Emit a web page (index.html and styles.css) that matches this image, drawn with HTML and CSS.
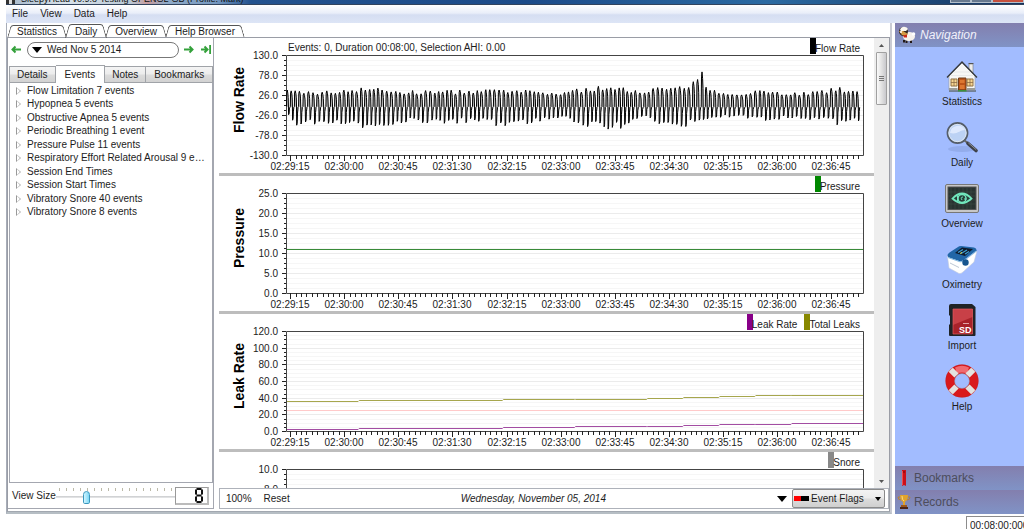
FILE: index.html
```html
<!DOCTYPE html>
<html lang="en">
<head>
<meta charset="utf-8">
<title>SleepyHead</title>
<link rel="stylesheet" href="styles.css">
</head>
<body>
<div class="window">
  <header class="titlebar"><span class="title-icon"></span><span class="title-text">SleepyHead v0.9.8-Testing OPENGL-GB (Profile: Mark)</span><span class="window-buttons"><i></i><i></i><i class="close"></i></span></header>
  <nav class="menubar"><button>File</button><button>View</button><button>Data</button><button>Help</button></nav>
  <div class="workspace">
    <div class="content">
      <div class="tabs" role="tablist">
        <button class="tab" role="tab">Statistics</button>
        <button class="tab active" role="tab" aria-selected="true">Daily</button>
        <button class="tab" role="tab">Overview</button>
        <button class="tab" role="tab">Help Browser</button>
      </div>
      <main class="page">
        <section class="day">
          <div class="datebar">
            <button class="arrow" aria-label="Previous day"><svg width="10" height="9" viewBox="0 0 10 9"><path d="M10 4.500H2M4.500 1.500L1.500 4.500l3 3" /></svg></button>
            <button class="date"><svg width="10" height="6" viewBox="0 0 10 6"><path d="M0 0h10L5 6z" fill="#000"/></svg>Wed Nov 5 2014</button>
            <button class="arrow" aria-label="Next day"><svg width="10" height="9" viewBox="0 0 10 9"><path d="M0 4.500H8M5.500 1.500l3 3-3 3"/></svg></button>
            <button class="arrow last" aria-label="Most recent day"><svg width="10" height="9" viewBox="0 0 10 9"><path d="M0 4.500H6M3.500 1.500l3 3-3 3M9.200 0v9"/></svg></button>
          </div>
          <div class="subtabs" role="tablist">
            <button role="tab">Details</button><button role="tab" class="active" aria-selected="true">Events</button><button role="tab">Notes</button><button role="tab" class="grow">Bookmarks</button>
          </div>
          <div class="tree-box">
            <ul class="tree">
              <li>Flow Limitation 7 events</li>
              <li>Hypopnea 5 events</li>
              <li>Obstructive Apnea 5 events</li>
              <li>Periodic Breathing 1 event</li>
              <li>Pressure Pulse 11 events</li>
              <li>Respiratory Effort Related Arousal 9 events</li>
              <li>Session End Times</li>
              <li>Session Start Times</li>
              <li>Vibratory Snore 40 events</li>
              <li>Vibratory Snore 8 events</li>
            </ul>
          </div>
          <div class="viewsize">
            <label for="view-size">View Size</label>
            <div class="slider"><div class="ticks"></div><input type="range" id="view-size" min="1" max="30" value="8"></div>
            <output class="lcd" for="view-size" aria-label="8"><svg width="8" height="15" viewBox="0 0 8 15"><path d="M1.500 1h5M1.500 7.500h5M1.500 14h5M1 1.500v5M7 1.500v5M1 8.500v5M7 8.500v5"/></svg></output>
          </div>
        </section>
        <section class="graphs">
          <div class="scroller">
            <div class="charts">
              <article class="chart" data-chart="flow"><header><span class="info">Events: 0, Duration 00:08:00, Selection AHI: 0.00</span><span class="legend black">Flow Rate</span></header></article>
              <article class="chart" data-chart="pressure"><header><span class="legend green">Pressure</span></header></article>
              <article class="chart" data-chart="leak"><header><span class="legend purple">Leak Rate</span><span class="legend olive">Total Leaks</span></header></article>
              <article class="chart" data-chart="snore"><header><span class="legend gray">Snore</span></header></article>
            </div>
            <div class="scrollbar">
              <svg width="5" height="3" viewBox="0 0 5 3"><path d="M0 3L2.500 0 5 3z"/></svg>
              <div class="thumb"><i></i></div>
              <svg class="down" width="5" height="3" viewBox="0 0 5 3"><path d="M0 0h5L2.500 3z"/></svg>
            </div>
          </div>
          <footer class="graphbar">
            <button>100%</button><button class="reset">Reset</button>
            <em>Wednesday, November 05, 2014</em>
            <button class="toggle" aria-label="Show graphs"><svg width="10" height="6" viewBox="0 0 10 6"><path d="M0 0h10L5 6z"/></svg></button>
            <div class="combo"><select aria-label="Graph"><option>Event Flags</option></select><svg width="6" height="4" viewBox="0 0 6 4"><path d="M0 0h6L3 4z"/></svg></div>
          </footer>
        </section>
      </main>
    </div>
    <aside class="sidebar">
      <h2 class="side-head nav-head"><svg width="18" height="18" viewBox="0 0 18 18"><path d="M6 14v2.500M8.500 14v3M13 14v3" stroke="#221815" stroke-width="2"/><ellipse cx="11" cy="10.500" rx="6" ry="4.500" fill="#f6f2ed"/><circle cx="15.500" cy="8" r="1.800" fill="#fff"/><circle cx="5.500" cy="5.500" r="4.500" fill="#32261f"/><path d="M2 4C3 0 8 0 10 3l-2 2L3 5z" fill="#faf7f1"/><path d="M1 5h4l5 3-2 2-4-1z" fill="#d49b45"/><path d="M5 9.500l4-1v3H6z" fill="#c92618"/><circle cx="3" cy="6" r="1" fill="#fff"/></svg>Navigation</h2>
      <nav class="side-nav">
        <a href="#statistics"><svg width="34" height="34" viewBox="0 0 34 34"><path d="M4 32h27" stroke="#718098" stroke-width="2"/><path d="M24 5h4v9h-4z" fill="#eee" stroke="#777" stroke-width=".6"/><path d="M23.500 4.500h5" stroke="#555"/><path d="M4 17L17 4l13 13v14H4z" fill="#f7f7f5" stroke="#999" stroke-width=".6"/><path d="M9 13h16M6 16.500h22M5 20h24M5 23.500h24M5 27h24" stroke="#dddfe0" stroke-width=".6"/><path d="M2 18.500L17 3l15 15.500" fill="none" stroke="#35383a" stroke-width="1.300"/><path d="M6 20h6v7H6zM22 20h6v7h-6z" fill="#f5d491" stroke="#947544"/><path d="M9 20v7M6 23.500h6M25 20v7M22 23.500h6" stroke="#8b6c48" stroke-width=".8"/><path d="M13.500 19h7.500v12h-7.500z" fill="#bd5419" stroke="#6c3a18"/><path d="M15 21h4.500v3H15zM15 26h4.500v4H15z" fill="#dc7731"/><path d="M4 29h8.500v2H4zM22 29h8v2h-8z" fill="#9b9c98"/><path d="M13 31h8.500v1.500H13z" fill="#3c913c"/></svg><span>Statistics</span></a>
        <a href="#daily"><svg width="34" height="34" viewBox="0 0 34 34"><ellipse cx="17" cy="29" rx="14" ry="3" fill="#7189c1" opacity=".3"/><circle cx="12.500" cy="13" r="10" fill="#bcd2f4" stroke="#555e6a" stroke-width="1.800"/><circle cx="12.500" cy="13" r="8.700" fill="none" stroke="#e7edf3" stroke-width=".8"/><path d="M5 13a8 8 0 0 1 15-3c-5 0-8 5-15 3z" fill="#e6efff" opacity=".8"/><path d="M19.500 20.500l4 3" stroke="#666" stroke-width="2"/><path d="M23 23.500l8 7" stroke="#3d4048" stroke-width="3.600" stroke-linecap="round"/><path d="M23.500 23l7.500 6.500" stroke="#8d9196" stroke-linecap="round"/></svg><span>Daily</span></a>
        <a href="#overview"><svg width="34" height="34" viewBox="0 0 34 34"><rect x=".5" y="3.500" width="33" height="28" rx="1.500" fill="#c7c7c7" stroke="#777"/><rect x="3" y="6" width="28" height="22.500" fill="#293331" stroke="#555"/><path d="M6 7v21M10 7v21M14 7v21M18 7v21M22 7v21M26 7v21M3 11h28M3 15h28M3 19h28M3 23h28" stroke="#405149" stroke-width=".5"/><path d="M7.500 17.500q9.500-10 19 0-9.500 9-19 0z" fill="#263e39" stroke="#72e7bd" stroke-width="1.800"/><circle cx="17" cy="17.500" r="4" fill="none" stroke="#72e7bd" stroke-width="1.500"/><path d="M12.500 14.500v6M18 16q-3 0-1 3M19 18h2.500" stroke="#72e7bd" fill="none"/></svg><span>Overview</span></a>
        <a href="#oximetry"><svg width="34" height="34" viewBox="0 0 34 34"><path d="M2.500 14.500L4 26l10 5.500q2 .5 4-1.500l11-10 3-11-13 10z" fill="#fff" stroke="#c2cbdc" stroke-width=".6"/><path d="M2.500 13q0-1 2-2.500L13 5q1-1 3-1l13 1.500q3 .5 2.500 3.500L18 18.500q-2 1-4 .5L4 15.500q-1.500-1-1.500-2.500z" fill="#2166a7"/><path d="M3 15.500l12 4.300q2 .2 4-1.300L31 9" fill="none" stroke="#82b7df"/><path d="M10 11l7-5.500L28 7l-8 7z" fill="#101b2b"/><path d="M13 10.500l5-3M16 11.500l6-3.500M20 12l4-2.500" stroke="#3e9ed3" stroke-width="1.300"/><path d="M15 11.500l2-1" stroke="#dedc4e"/><circle cx="20.500" cy="20.500" r="3.200" fill="#16558e"/><path d="M5 21l9 4.500" stroke="#bdc7d3"/></svg><span>Oximetry</span></a>
        <a href="#import"><svg width="34" height="34" viewBox="0 0 34 34"><path d="M6 1h21l3.500 3v28q0 1-1 1H5q-1 0-1-1V22l1-1v-8l-1-1V3q0-2 2-2z" fill="#202326"/><path d="M8 6h19.500v25H8z" fill="#a8222a"/><path d="M8 6h19.500v8L8 22z" fill="#c84047"/><path d="M8 6h19.500v25H8z" fill="none" stroke="#e05a5f" stroke-width=".7"/><path d="M18 20.500h6" stroke="#e3a4a7"/><text x="14" y="30" class="sd">SD</text></svg><span>Import</span></a>
        <a href="#help"><svg width="34" height="34" viewBox="0 0 34 34"><circle cx="17" cy="17" r="12" fill="none" stroke="#d9191c" stroke-width="9"/><path d="M10 3.500Q17 0 24 3.500l-2 6q-5-2-10 0z" fill="#f16b70"/><g stroke="#e3e2df" stroke-width="6"><path d="M5.500 5.500l6 6M22.500 22.500l6 6M28.500 5.500l-6 6M11.500 22.500l-6 6"/></g><circle cx="17" cy="17" r="16.300" fill="none" stroke="#a9292e" stroke-opacity=".35" stroke-width=".7"/><circle cx="17" cy="17" r="7.500" fill="none" stroke="#947a85" stroke-opacity=".5"/></svg><span>Help</span></a>
      </nav>
      <button class="side-head"><svg width="18" height="18" viewBox="0 0 18 18"><path d="M7 1h4v16l-2-1-2 1z" fill="#cc1019"/><path d="M7.500 2v14" stroke="#ed4b4b"/><circle cx="9" cy="3" r=".8" fill="#700"/></svg>Bookmarks</button>
      <button class="side-head"><svg width="18" height="18" viewBox="0 0 18 18"><path d="M5 2h8c0 5-2 6-3 7v3H8V9C6 8 5 6 5 2z" fill="#e1a32b"/><path d="M5 4H3q0 3 3 3M13 4h2q0 3-3 3" fill="none" stroke="#bd8431"/><path d="M7 3q0 4 2 5" stroke="#f9dc83" fill="none"/><path d="M6 12h6v2H6z" fill="#9c561d"/><path d="M5 14h8v2H5z" fill="#4b2419"/></svg>Records</button>
    </aside>
  </div>
  <footer class="status"><input aria-label="Duration" value="00:08:00:000" readonly></footer>
</div>
<script src="charts.js"></script>
</body>
</html>
```

FILE: styles.css
```css
* { box-sizing: border-box; }
body { margin: 0; background: #fff; color: #1c1c1c; font: 10px/12px "Liberation Sans", Arial, sans-serif; overflow: hidden; }
button, input, select { font: inherit; color: inherit; border: 0; background: none; margin: 0; padding: 0; }
svg { display: block; flex: none; }
.window { height: 100vh; display: flex; flex-direction: column; padding-left: 6px; }

.titlebar { height: 5px; flex: none; display: flex; align-items: flex-end; overflow: hidden; background: linear-gradient(90deg, #a5b7c9, #d8e2ea 60px, #b9c7d4 125px, #c79a9c 142px, #90abc8 160px, #7598c0 210px, #23528e 245px, #1c4b89 520px, #2b6aa2 760px, #16345f); border-bottom: 1px solid #31435d; }
.title-icon { width: 9px; height: 4px; margin: 0 6px 0 0; background: repeating-linear-gradient(90deg, #333 0 3px, #ddd 3px 6px); }
.title-text { white-space: nowrap; color: #111; font-size: 9px; line-height: 9px; }
.window-buttons { margin-left: auto; display: flex; align-self: flex-start; }
.window-buttons i { width: 21px; height: 3px; background: #66788e; border: 1px solid #b3bfcb; border-top: 0; }
.window-buttons .close { width: 32px; background: #c6503d; }

.menubar { height: 18px; flex: none; display: flex; gap: 12px; padding: 0 6px; background: linear-gradient(#fff, #e9eef9 45%, #d5def2 55%, #dde5f6); }
.workspace { flex: 1; min-height: 0; display: flex; gap: 3px; }
.content { flex: 1; min-width: 0; display: flex; flex-direction: column; border: 1px solid #a7adb8; border-top: 0; border-right: 2px solid #c9cbd3; border-bottom: 2px solid #b6bec4; }

.tabs { height: 14px; flex: none; display: flex; gap: 2px; padding: 2px 2px 0; }
.tab { position: relative; height: 12px; padding: 0 8px; line-height: 13px; }
.tab::before, .tab::after { content: ""; position: absolute; top: 0; bottom: 0; width: 50%; border-top: 1px solid #555; pointer-events: none; }
.tab::before { left: 0; border-left: 1px solid #555; border-top-left-radius: 3px; transform: skewX(-16deg); }
.tab::after { right: 0; border-right: 1px solid #555; border-top-right-radius: 3px; transform: skewX(16deg); }
.tab.active { height: 14px; margin-top: -1px; padding-top: 1px; }

.page { flex: 1; min-height: 0; display: flex; gap: 5px; border: 1px solid #9a9da6; border-bottom-color: #a2a8b0; padding-bottom: 2px; }
.day { width: 206px; flex: none; display: flex; flex-direction: column; border: 1px solid #a4a7b0; border-top: 0; border-left: 0; padding: 0 0 0 1px; }
.datebar { display: flex; align-items: center; height: 27px; padding: 0 2px 4px; flex: none; }
.arrow svg path { fill: none; stroke: #34a13b; stroke-width: 2; }
.date { width: 152px; height: 16px; margin: 0 5px 0 6px; display: flex; align-items: center; gap: 5px; padding: 0 4px; border: 1px solid #777; border-radius: 8px; }
.arrow.last { margin-left: 7px; }
.subtabs { height: 18px; flex: none; display: flex; align-items: flex-end; }
.subtabs button { height: 17px; padding: 0 7px; border: 1px solid #a0a3a8; border-left-width: 0; background: linear-gradient(#f4f4f4, #ececec 48%, #dcdcdc 52%, #d2d2d2); }
.subtabs button:first-child { border-left-width: 1px; }
.subtabs button.active { height: 18px; padding: 0 9px; background: #fff; border-bottom: 0; }
.subtabs .grow { flex: 1; }
.tree-box { flex: 1; min-height: 0; border: 1px solid #a4a7b0; border-top: 0; overflow: hidden; }
.tree { list-style: none; margin: 0; padding: 1px 4px 0 6px; height: 136px; display: grid; grid-template-rows: repeat(10, 1fr); align-items: center; }
.tree li { min-width: 0; padding-left: 11px; overflow: hidden; text-overflow: ellipsis; white-space: nowrap; position: relative; }
.tree li::before, .tree li::after { content: ""; position: absolute; left: 0; top: 2px; border: 4px solid transparent; border-left: 5px solid #999; border-right: 0; }
.tree li::after { left: 1px; top: 3px; border-width: 3px 0 3px 3px; border-left-color: #fff; }

.viewsize { height: 25px; flex: none; display: flex; align-items: center; padding: 0 4px 0 3px; }
.slider { flex: 1; min-width: 0; display: flex; flex-direction: column; }
.ticks { height: 3px; margin: 0 3px 0 3px; background: repeating-linear-gradient(90deg, #bbb9a8 0 1px, transparent 1px 7px); }
.slider input { appearance: none; width: 100%; height: 13px; background: linear-gradient(#c9cbcd, #e9eaeb) center / 100% 2px no-repeat; }
.slider input::-webkit-slider-thumb { appearance: none; width: 7px; height: 13px; border: 1px solid #3a97be; border-radius: 4px 4px 2px 2px; background: linear-gradient(90deg, #d2f5ff, #7ed9f7); }
.lcd { width: 34px; height: 18px; display: flex; align-items: center; justify-content: flex-end; padding-right: 4px; border: 1px solid #999; border-right: 2px solid #bbb; border-bottom: 2px solid #bbb; }
.lcd path { stroke: #111; stroke-width: 2; }

.graphs { flex: 1; min-width: 0; display: flex; flex-direction: column; }
.scroller { flex: 1; min-height: 0; display: flex; overflow: hidden; }
.charts { flex: 1; min-width: 0; overflow: hidden; }
.chart { height: 138px; border-bottom: 3px solid #bdbdbd; }
.chart header { height: 17px; display: flex; justify-content: flex-end; gap: 7px; padding: 0 14px 0 69px; }
.info { margin-right: auto; padding-top: 4px; }
.legend { padding-top: 5px; padding-left: 5px; height: 16px; background: left / 6px 100% no-repeat; }
.black { background-image: linear-gradient(#000, #000); }
.green { background-image: linear-gradient(#080, #080); }
.purple { background-image: linear-gradient(#808, #808); }
.olive { background-image: linear-gradient(#880, #880); }
.gray { background-image: linear-gradient(#888, #888); }
.plot { width: 100%; height: 118px; overflow: visible; fill: #1c1c1c; }
.plot .name { font-size: 14px; font-weight: bold; fill: #000; }
.plot path { fill: none; stroke-width: 1; }
.plot .wave { fill: #bbb; }
.scrollbar { width: 15px; flex: none; background: #eee; display: flex; flex-direction: column; align-items: center; padding: 6px 1px 5px; fill: #555; }
.thumb { width: 11px; height: 53px; margin-top: 5px; display: grid; place-items: center; border: 1px solid #a0a0a0; border-radius: 1px; background: linear-gradient(90deg, #fafafa, #e2e2e2 50%, #c8c8cc); }
.thumb i { width: 5px; height: 6px; background: repeating-linear-gradient(#777 0 1px, transparent 1px 2px); }
.scrollbar .down { margin-top: auto; }
.graphbar { height: 21px; flex: none; display: flex; align-items: center; padding: 0 3px 0 6px; border: 1px solid #aeb2ba; }
.reset { margin-left: 12px; }
.graphbar em { flex: 1; text-align: center; }
.toggle { margin-right: 5px; }
.combo { display: grid; align-items: center; width: 93px; height: 19px; border: 1px solid #8a8a8a; border-radius: 2px; background: linear-gradient(#f3f3f3, #ebebeb 48%, #dcdcdc 52%, #cfcfcf); }
.combo > * { grid-area: 1 / 1; }
.combo select { appearance: none; width: 100%; height: 17px; padding-left: 18px; background: linear-gradient(90deg, #f00 50%, #000 50%) 1px center / 15px 5px no-repeat; }
.combo svg { justify-self: end; margin-right: 3px; pointer-events: none; }

.sidebar { width: 129px; flex: none; display: flex; flex-direction: column; background: #a2bcff; }
.side-head { margin: 0; height: 24px; flex: none; display: flex; align-items: center; gap: 0; padding: 0; font-size: 12px; font-weight: normal; color: #4d4d5c; background: linear-gradient(#837fae, #8093c6); }
.side-head svg { margin-right: 1px; }
.nav-head { color: #f1f1fa; font-style: italic; padding: 0 3px; gap: 3px; }
.side-nav { flex: 1; min-height: 0; padding: 12px 0 0 5px; }
.side-nav a { height: 61px; display: flex; flex-direction: column; align-items: center; gap: 3px; color: inherit; text-decoration: none; }
.sd { font-size: 9px; font-weight: bold; fill: #fff; }
.status { height: 15px; flex: none; display: flex; justify-content: flex-end; overflow: hidden; padding-top: 2px; }
.status input { width: 58px; height: 18px; flex: none; border: 1px solid #8c8c8c; border-right: 0; padding: 0 0 0 3px; }
```

FILE: charts.js
```js
const LEFT = 67, RIGHT = 11, H = 100;
const START = 11.5, SPAN = 480;
const times = ["02:29:15", "02:30:00", "02:30:45", "02:31:30", "02:32:15", "02:33:00", "02:33:45", "02:34:30", "02:35:15", "02:36:00", "02:36:45"];

// Envelope of the breathing signal: position along the session, inhale peak, exhale trough
const envelope = [
  [0, 36, -30], [.012, 36, -54], [.06, 33, -46], [.1, 38, -48], [.135, 46, -60], [.17, 38, -56], [.21, 34, -42],
  [.27, 36, -50], [.32, 36, -42], [.37, 38, -54], [.44, 34, -42], [.475, 30, -32], [.51, 42, -54], [.55, 46, -60],
  [.58, 42, -58], [.61, 38, -34], [.65, 44, -50], [.69, 46, -54], [.71, 62, -40], [.73, 38, -36], [.77, 30, -30],
  [.82, 38, -42], [.87, 30, -36], [.92, 34, -38], [.95, 42, -50], [1, 42, -42]
];
const steps = [0, .125, .375, .5, .625, .6875, .75, .8125, .875, 1];
const charts = {
  flow: { name: "Flow Rate", labels: ["130.0", "78.0", "26.0", "-26.0", "-78.0", "-130.0"], mid: 45 },
  pressure: { name: "Pressure", labels: ["25.0", "20.0", "15.0", "10.0", "5.0", "0.0"], mid: 45, max: 25,
    lines: [["#388a38", [11]]] },
  leak: { name: "Leak Rate", labels: ["120.0", "100.0", "80.0", "60.0", "40.0", "20.0", "0.0"], mid: 45, max: 120,
    lines: [["#a6a64d", [36, 37, 38, 39, 40, 41, 42, 43, 43]], ["#ffcaca", [25]], ["#a34da3", [3, 4, 5, 6, 6, 7, 8, 9, 10]]] },
  snore: { name: "Snore", labels: ["10.0", "8.0", "6.0", "4.0", "2.0", "0.0"], mid: 60 }
};

function at(f, column) {
  const i = Math.max(1, envelope.findIndex(e => e[0] >= f));
  const a = envelope[i - 1], b = envelope[i];
  return a[column] + (b[column] - a[column]) * (f - a[0]) / (b[0] - a[0]);
}

function flowPath(width) {
  let seed = 7;
  const rnd = () => (seed = seed * 16807 % 2147483647) / 2147483647;
  const y = v => (50 - v / 2.6).toFixed(1);
  const points = [];
  for (let s = 0; s < SPAN - 3; ) {
    const period = 3.2 + rnd() * .8, f = s / SPAN, scale = .8 + rnd() * .3;
    let up = at(f, 1) * scale;
    if (Math.abs(f - .715) < .004) up = 86;
    const down = at(f, 2) * (.75 + rnd() * .3);
    [[0, -4], [.06, up * .85], [.2, up], [.35, up * .8], [.45, up * .5], [.5, 0], [.55, down], [.68, down * .9], [.75, down * .4], [.88, -6]].forEach(([p, v]) =>
      points.push((LEFT + .5 + (s + p * period) / SPAN * width).toFixed(1) + " " + y(v)));
    s += period;
  }
  return "M" + points.join("L");
}

function draw(article) {
  const c = charts[article.dataset.chart];
  const total = article.clientWidth, w = total - LEFT - RIGHT;
  const n = c.labels.length - 1;
  let major = "", minor = "", ticks = "", text = "";
  for (let i = 0; i <= n * 4; i++) {
    const y = Math.round(i * H / n / 4) + .5, big = i % 4 === 0;
    ticks += `M${LEFT - (big ? 4 : 2)} ${y}h${big ? 4 : 2}`;
    if (i && i < n * 4) {
      if (big) major += `M${LEFT} ${y}h${w}`; else minor += `M${LEFT} ${y}h${w}`;
    }
    if (big) text += `<text x="59" y="${y + 3.5}" text-anchor="end">${c.labels[i / 4]}</text>`;
  }
  for (let t = 15; t < START + SPAN - 2; t += 4.5) {
    const x = Math.round(LEFT + (t - START) / SPAN * w) + .5;
    ticks += `M${x} ${H}v${(t - 15) % 45 === 0 ? 6 : 4}`;
  }
  times.forEach((label, i) => {
    const x = Math.round(LEFT + (15 + i * 45 - START) / SPAN * w);
    text += `<text x="${x}" y="115" text-anchor="middle">${label}</text>`;
  });
  let data = "";
  if (c.lines) c.lines.forEach(([color, values]) => {
    let d = "";
    values.forEach((v, i) => {
      const from = steps[i], to = values.length === 1 ? 1 : steps[i + 1];
      d += `${i ? "L" : "M"}${LEFT + 1 + from * w} ${Math.round(H - v / c.max * H) + .5}H${LEFT + to * w}`;
    });
    data += `<path d="${d}" stroke="${color}"/>`;
  });
  if (article.dataset.chart === "flow") data = `<path class="wave" d="${flowPath(w)}" stroke="#000"/>`;
  article.querySelector("svg")?.remove();
  article.insertAdjacentHTML("beforeend", `<svg class="plot">
    <path d="${minor}" stroke="#f6f6f6"/><path d="${major}" stroke="#ebebeb"/>
    <path d="M${LEFT + .5} .5h${w}v${H}h${-w}z" stroke="#444"/><path d="${ticks}" stroke="#222"/>
    ${data}${text}
    <text class="name" transform="translate(25 ${c.mid}) rotate(-90)" text-anchor="middle">${c.name}</text></svg>`);
}

function drawAll() { document.querySelectorAll(".chart").forEach(draw); }
drawAll();
addEventListener("resize", drawAll);
```
